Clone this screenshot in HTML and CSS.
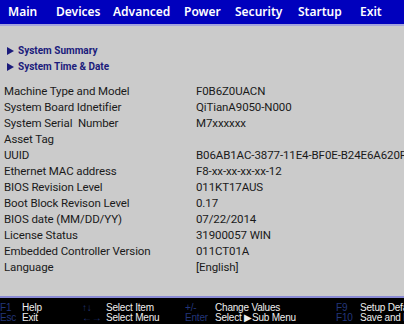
FILE: index.html
```html
<!DOCTYPE html>
<html lang="en">
<head>
    <meta charset="UTF-8">
    <meta name="viewport" content="width=device-width, initial-scale=1.0">
    <title>BIOS Setup - Main</title>
    <link rel="stylesheet" href="styles.css">
</head>
<body>
    <div class="screen">
        <ul class="menu-bar">
            <li class="menu-item active">Main</li>
            <li class="menu-item">Devices</li>
            <li class="menu-item">Advanced</li>
            <li class="menu-item">Power</li>
            <li class="menu-item">Security</li>
            <li class="menu-item">Startup</li>
            <li class="menu-item">Exit</li>
        </ul>

        <div class="content">
            <ul class="submenus">
                <li class="submenu"><span class="arrow"></span>System Summary</li>
                <li class="submenu"><span class="arrow"></span>System Time &amp; Date</li>
            </ul>

            <div class="info-table">
                <div class="info-label">Machine Type and Model</div><div class="info-value">F0B6Z0UACN</div>
                <div class="info-label">System Board Idnetifier</div><div class="info-value">QiTianA9050-N000</div>
                <div class="info-label">System Serial &nbsp;Number</div><div class="info-value">M7xxxxxx</div>
                <div class="info-label">Asset Tag</div><div class="info-value"></div>
                <div class="info-label">UUID</div><div class="info-value">B06AB1AC-3877-11E4-BF0E-B24E6A620F0</div>
                <div class="info-label">Ethernet MAC address</div><div class="info-value">F8-xx-xx-xx-xx-12</div>
                <div class="info-label">BIOS Revision Level</div><div class="info-value">011KT17AUS</div>
                <div class="info-label">Boot Block Revison Level</div><div class="info-value">0.17</div>
                <div class="info-label">BIOS date (MM/DD/YY)</div><div class="info-value">07/22/2014</div>
                <div class="info-label">License Status</div><div class="info-value">31900057 WIN</div>
                <div class="info-label">Embedded Controller Version</div><div class="info-value">011CT01A</div>
                <div class="info-label">Language</div><div class="info-value">[English]</div>
            </div>
        </div>

        <div class="help-bar">
            <div class="help-group g1">
                <span class="key">F1</span><span class="desc">Help</span>
                <span class="key">Esc</span><span class="desc">Exit</span>
            </div>
            <div class="help-group g2">
                <span class="key">&#8593;&#8595;</span><span class="desc">Select Item</span>
                <span class="key">&#8592;&#8594;</span><span class="desc">Select Menu</span>
            </div>
            <div class="help-group g3">
                <span class="key">+/-</span><span class="desc">Change Values</span>
                <span class="key">Enter</span><span class="desc">Select &#9654;Sub Menu</span>
            </div>
            <div class="help-group g4">
                <span class="key">F9</span><span class="desc">Setup Defaults</span>
                <span class="key">F10</span><span class="desc">Save and Exit</span>
            </div>
        </div>
    </div>
</body>
</html>
```

FILE: styles.css
```css
html, body { margin: 0; padding: 0; }
body { width: 404px; height: 324px; overflow: hidden; background: #cbcbcb; font-family: Roboto, "Noto Sans", sans-serif; }
.screen { display: flex; flex-direction: column; height: 324px; }

.menu-bar { display: flex; margin: 0; padding: 0 0 0 8px; list-style: none; height: 24px; background: #0000bd; border-bottom: 2px solid #a4a4dc; }
.menu-item { flex-shrink: 0; color: #ffffff; font-family: "Noto Sans", sans-serif; font-weight: 600; font-size: 12px; line-height: 24px; white-space: nowrap; }
.menu-item:nth-child(1) { width: 48px; }
.menu-item:nth-child(2) { width: 57px; }
.menu-item:nth-child(3) { width: 71px; }
.menu-item:nth-child(4) { width: 51px; }
.menu-item:nth-child(5) { width: 63px; }
.menu-item:nth-child(6) { width: 62px; }

.content { flex: 1; padding: 17px 0 0 4px; overflow: hidden; }
.submenus { margin: 0 0 8px 0; padding: 0 0 0 3px; list-style: none; }
.submenu { display: flex; align-items: center; color: #1c1c7c; font-weight: 700; font-size: 10px; line-height: 16px; height: 16px; white-space: nowrap; }
.arrow { width: 0; height: 0; margin-right: 4px; border-left: 7px solid #1c1c7c; border-top: 4px solid transparent; border-bottom: 4px solid transparent; }

.info-table { display: grid; grid-template-columns: 192px auto; font-size: 11.5px; letter-spacing: -0.1px; line-height: 16px; color: #1a1a1a; }
.info-label, .info-value { white-space: nowrap; height: 16px; }

.help-bar { height: 26px; flex-shrink: 0; overflow: hidden; background: #000000; border-top: 2px solid #8a8ad4; display: flex; padding: 0; font-family: "Liberation Sans", Arial, sans-serif; font-size: 10px; line-height: 9.5px; }
.help-group { flex-shrink: 0; display: grid; align-content: start; padding-top: 5px; white-space: nowrap; letter-spacing: -0.2px; }
.key { color: #23367a; }
.desc { color: #eeeeee; }
.g1 { width: 82px; grid-template-columns: 22px auto; }
.g2 { width: 103px; grid-template-columns: 24px auto; }
.g3 { width: 151px; grid-template-columns: 30px auto; }
.g4 { width: 120px; grid-template-columns: 24px auto; }
```
